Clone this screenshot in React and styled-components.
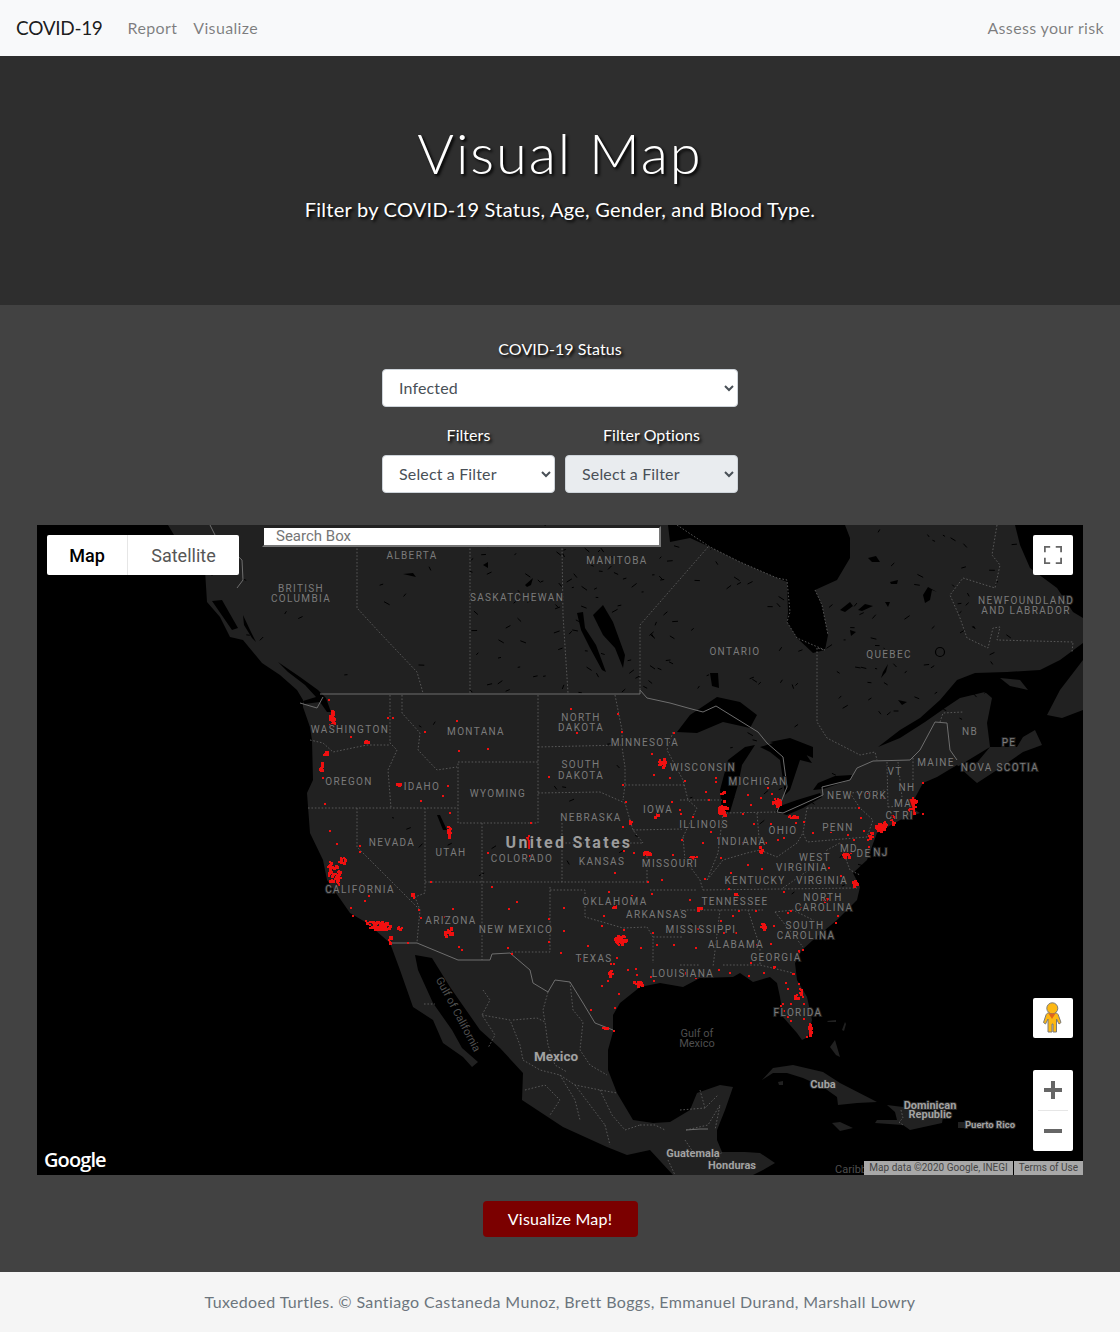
import React from 'react';
import styled, { createGlobalStyle } from 'styled-components';

const GlobalStyle = createGlobalStyle`
  body {
    margin: 0;
    background: #424242;
    font-family: 'Lato', 'Noto Sans', sans-serif;
  }
`;

// all map geometry is in page pixels, the viewBox lines it up with the frame
const LAND = [
  'M168 525L180 545L205 570L207 602L220 617L230 637L243 640L262 663L280 675L297 690L303 700L303 707L310 727L312 740L313 780L307 793L310 833L323 860L327 880L350 913L367 923L390 943L400 970L413 1007L433 1020L443 1043L463 1057L472 1067L478 1062L462 1048L452 1030L433 1003L418 970L415 955L432 958L450 987L480 1030L500 1048L523 1073L522 1100L563 1127L607 1147L627 1155L650 1150L673 1175L753 1175L763 1170L775 1163L760 1153L745 1152L722 1152L717 1140L717 1130L725 1110L733 1087L720 1085L697 1093L690 1110L670 1122L653 1123L633 1120L617 1093L608 1070L608 1050L613 1032L613 1015L620 1003L640 987L660 983L683 987L700 978L733 977L740 973L753 982L770 977L777 983L780 997L783 1017L797 1033L802 1040L808 1037L812 1020L807 997L797 980L795 963L802 950L813 940L837 920L857 900L860 887L853 873L867 860L877 833L900 820L920 813L910 807L923 783L937 777L957 765L970 777L977 783L997 770L1023 752L1042 745L1035 730L1023 737L1017 747L990 747L987 723L992 698L985 692L960 698L945 708L925 722L900 738L878 747L900 730L920 718L940 700L957 680L975 673L1007 672L1040 670L1060 660L1083 643L1083 618L1073 612L1057 588L1030 568L1020 545L1015 525Z',
  'M1083 660L1060 690L1047 715L1062 718L1083 710Z',
  'M1000 678L1020 680L1028 690L1010 686Z',
  'M762 1080L773 1068L793 1065L823 1072L840 1083L877 1102L857 1103L838 1105L837 1097L823 1087L803 1078L787 1073L773 1073Z',
  'M778 1082L783 1081L783 1085L779 1085Z',
  'M887 1105L903 1107L920 1110L943 1117L942 1123L910 1130L903 1125L875 1123L877 1120L897 1120L895 1112Z',
  'M832 1123L840 1122L853 1128L840 1131Z',
  'M958 1122L967 1122L967 1128L958 1128Z',
  'M830 1047L835 1040L840 1057L836 1055Z',
  'M842 1030L845 1022L846 1024L844 1031Z',
  'M827 1021L836 1020L836 1022L828 1022Z',
];

const WATER = [
  // hudson and james bay
  'M668 525L670 542L690 538L710 547L740 562L777 578L787 582L788 612L787 622L797 638L813 653L825 650L828 635L822 605L815 590L837 580L850 558L850 538L845 525Z',
  // superior, michigan, huron, north channel, erie, ontario
  'M677 732L690 715L717 697L740 702L757 715L750 728L723 722L697 733Z',
  'M722 813L720 790L728 760L745 747L755 745L742 765L738 785L730 812Z',
  'M760 747L773 743L790 745L803 750L812 763L800 760L795 775L790 790L785 795L783 780L780 760L770 752Z',
  'M770 742L790 738L813 747L813 758L795 750Z',
  'M775 812L787 815L803 808L822 797L820 793L797 800L780 806Z',
  'M813 790L823 789L850 780L852 775L835 776L818 783Z',
  // lake winnipeg and friends
  'M593 615L603 605L613 622L625 655L623 668L615 648L603 635Z',
  'M577 613L583 612L585 628L596 645L606 672L602 670L590 648L581 630Z',
  'M710 673L718 673L719 688L712 686Z',
  // quebec lakes
  'M840 610L850 602L853 606L845 612Z', 'M858 610L865 604L873 606L862 611Z', 'M885 602L890 602L888 607Z',
  'M923 595L928 587L937 592L932 590L930 600L925 603Z', 'M890 582L898 580L897 584L891 584Z', 'M868 558L876 556L880 562L872 562Z',
  'M850 630L856 632L851 636Z', 'M898 700L907 702L902 705Z', 'M883 672L888 664L886 672L881 678Z',
  'M525 585L533 578L531 585L527 587Z', 'M483 565L488 562L488 568Z', 'M403 574L413 573L416 577Z',
  // salt lake, fundy
  'M437 815L440 815L447 830L443 830Z',
  'M957 767L990 747L975 765L968 772Z',
  // strait of georgia, juan de fuca and the channels of bc
  'M278 662L300 677L318 690L326 698L331 712L327 712L320 702L304 704L303 701L316 697L305 685L288 672Z',
  'M212 601L222 600L238 628L232 630Z',
  'M182 545L200 560L213 576L208 574L192 560Z',
  'M243 615L250 630L256 642L252 638L244 625Z',
];

const INTERNATIONAL = [
  'M320 694L640 694L640 690L647 698L670 703L688 708L703 712L716 706L758 732L767 743L783 757L787 787L777 812L783 813L823 795L822 787L850 780L857 768L873 761L910 760L920 750L935 722L947 723L950 750L957 760',
  'M300 703L317 708L323 697',
  'M210 525L215 535L242 560L243 580L237 588',
  'M390 943L417 943L458 960L490 960L492 954L510 953L530 970L533 983L548 992L555 980L570 982L583 1003L595 1023L613 1030',
  'M686 1130L700 1129L708 1129',
];

const STATE_LINES = [
  // canada
  'M357 545L357 608L380 633L417 672L423 693', 'M470 545L470 693', 'M562 545L563 615L568 693',
  'M708 547L640 625L640 690', 'M817 648L817 722L827 738L860 755L875 752L877 760',
  'M997 525L992 555L1000 565L995 588L963 578L950 595L960 618L967 638L988 648L993 628L1000 627L997 640L1073 642L1072 652',
  'M677 525L710 547L740 562L777 578L787 580L790 612L787 622L797 638L813 645L825 650L817 648',
  'M815 590L822 605L828 635',
  'M940 722L943 713L963 712',
  // western states
  'M310 740L323 743L333 752L367 745L390 745', 'M390 695L390 743L397 750L388 770L391 808',
  'M402 695L402 713L420 733L418 750L437 770L457 767', 'M458 762L538 762L538 823L458 823Z',
  'M308 808L458 808', 'M357 808L357 847L420 910', 'M425 808L425 893L415 897L420 910L417 942',
  'M482 823L482 960', 'M425 882L647 882', 'M562 823L562 882', 'M538 695L538 762',
  'M538 793L600 792L625 803L633 830L643 843', 'M562 843L643 843', 'M647 853L647 882',
  'M538 747L622 745', 'M615 695L622 730L622 747L625 767L625 785L623 800', 'M625 785L685 785',
  'M673 732L667 750L683 780L688 800L697 808L683 837', 'M633 830L682 829',
  'M550 890L585 890L585 917L623 928L647 927', 'M550 887L550 952L510 952',
  'M650 890L697 890', 'M653 937L683 937', 'M647 927L653 937L653 963', 'M680 965L700 965',
  'M683 837L685 860L700 880L703 890',
  // eastern states
  'M703 890L857 888', 'M680 910L763 910', 'M720 910L713 967', 'M748 910L760 947L760 965',
  'M723 965L760 965L793 973', 'M775 912L793 910L817 922', 'M775 912L803 947',
  'M680 800L722 800', 'M723 813L718 853L707 880', 'M723 813L777 812', 'M757 813L760 850',
  'M707 880L723 860L747 853L760 850L777 857L797 843L803 833L807 808',
  'M807 808L860 808L873 820L867 837L807 842L803 833', 'M840 843L850 870L860 875',
  'M783 888L813 867L827 850L840 843', 'M887 762L888 807', 'M898 762L902 797', 'M913 758L913 783', 'M888 807L910 805',
  'M860 808L850 793L888 790',
  // mexico
  'M483 990L490 1000L482 1015L495 1035L488 1048', 'M482 1015L510 1020L520 1045L523 1060',
  'M513 1020L537 1018L545 1022L548 1045L555 1065L567 1072', 'M548 992L543 1010L545 1022',
  'M570 982L573 1010L583 1022L580 1050L590 1065L607 1075',
  'M523 1060L540 1070L560 1075L575 1085L600 1090L617 1093',
  'M525 1090L545 1085L560 1100L550 1115', 'M560 1075L575 1100L580 1120',
  'M575 1085L590 1105L605 1125', 'M600 1090L612 1115L625 1130L640 1125',
  'M605 1125L610 1145', 'M640 1125L655 1125L665 1130',
  'M680 1110L705 1108L718 1095', 'M705 1108L700 1090', 'M686 1130L708 1125L720 1105L715 1130',
  'M685 1140L695 1155', 'M668 1160L675 1175', 'M708 1170L722 1152',
  'M424 1004L435 1004',
  'M901 1110L903 1118L899 1122L903 1125',
];

const makeRng = (seed) => () => {
  seed = (seed * 16807) % 2147483647;
  return (seed - 1) / 2147483646;
};

// little lakes scattered over canada and the states
const makeFlecks = () => {
  const rnd = makeRng(4242);
  let d = '';
  const regions = [
    [240, 530, 430, 160, 30],
    [470, 528, 200, 165, 80],
    [640, 530, 240, 160, 40],
    [830, 530, 190, 190, 60],
    [320, 700, 380, 200, 18],
    [680, 720, 200, 220, 18],
  ];
  regions.forEach(([x, y, w, h, n]) => {
    for (let i = 0; i < n; i++) {
      const px = x + rnd() * w;
      const py = y + rnd() * h;
      const dx = 1 + rnd() * 4;
      const dy = (rnd() - 0.5) * 7;
      d += `M${px.toFixed(1)} ${py.toFixed(1)}l${dx.toFixed(1)} ${dy.toFixed(1)}`;
    }
  });
  return d;
};

const from5 = ([x, y]) => [300 + x / 3, 680 + y / 3];
const from6 = ([x, y]) => [680 + x / 3, 680 + y / 3];
const from8 = ([x, y]) => [400 + x / 3, 960 + y / 3];
const from11 = ([x, y]) => [740 + x / 3, 940 + y / 3];

const DOTS_5 = [[85,58],[468,120],[372,152],[150,167],[262,112],[275,112],[475,211],[560,205],[63,263],[65,290],[125,290],[442,315],[427,344],[360,360],[72,368],[447,397],[88,450],[108,488],[176,495],[178,513],[560,517],[690,427],[810,85],[952,98],[962,152],[828,155],[1120,157],[1052,218],[1058,283],[1108,290],[1152,300],[745,288],[965,313],[975,363],[1112,362],[1138,387],[1175,408],[990,422],[1140,400],[966,437],[968,510],[1000,517],[1115,521],[1144,478],[943,577],[1082,597],[1040,603],[390,603],[572,618],[925,632],[992,645],[648,662],[790,682],[625,685],[1052,640],[1168,656],[1110,690],[1190,690],[908,706],[745,713],[456,684],[430,708],[361,712],[902,735],[968,748],[1056,755],[788,750],[620,800],[632,820],[475,797],[482,808],[745,782],[860,796],[780,815],[838,835],[948,830],[1120,793],[1067,793],[1020,800],[930,850],[935,880],[180,612],[205,645],[150,680],[155,705],[193,660],[120,590],[335,640],[340,650],[355,686],[290,740],[300,745],[322,785]];
const DOTS_6 = [[65,245],[105,290],[105,303],[75,332],[120,340],[200,342],[240,350],[272,338],[260,320],[210,372],[185,400],[35,408],[85,358],[90,453],[110,470],[65,485],[160,470],[185,485],[255,485],[240,510],[290,478],[310,470],[220,428],[270,430],[345,425],[370,422],[395,455],[450,452],[500,462],[520,478],[550,450],[540,412],[535,380],[475,330],[560,335],[610,350],[725,307],[725,400],[645,378],[648,400],[560,478],[565,497],[480,490],[510,508],[150,575],[200,553],[242,563],[72,595],[145,625],[120,530],[310,632],[380,645],[395,595],[445,562],[480,585],[485,665],[360,680],[430,687],[470,705],[465,725],[395,775],[365,808],[355,812],[330,690],[280,735],[225,690],[155,705],[120,720],[175,690],[130,755],[165,755],[45,800],[130,795],[235,795],[270,790],[210,845],[280,860],[335,880],[115,868],[55,880],[85,878],[15,880],[50,745],[320,695]];
const DOTS_8 = [[630,30],[640,10],[603,74],[622,60],[655,98],[643,142],[570,148],[638,210],[750,48],[760,60],[825,42],[855,36],[885,50],[925,36],[988,36],[1045,44],[1090,36],[1122,18],[1178,40],[680,28],[704,24],[708,42]];
const DOTS_11 = [[178,145],[165,170],[190,190],[120,195],[150,188],[150,240],[157,100],[135,125],[140,145],[175,130],[30,65],[70,95],[100,78],[25,105],[90,8],[175,30],[47,12],[125,190],[130,210],[140,228],[205,215],[188,235],[198,288],[178,155],[185,168]];

// [mapper, x, y, half width, half height, count]
const CLUSTERS = [
  [from5, 92, 120, 8, 20, 22], [from5, 95, 95, 3, 8, 6], [from5, 78, 218, 10, 6, 10], [from5, 62, 263, 7, 4, 5],
  [from5, 196, 183, 6, 3, 6], [from5, 292, 310, 9, 3, 8], [from5, 65, 248, 3, 7, 4],
  [from5, 98, 575, 18, 30, 36], [from5, 122, 537, 14, 10, 12], [from5, 85, 550, 8, 10, 8], [from5, 108, 600, 8, 12, 8],
  [from5, 238, 735, 36, 12, 55], [from5, 205, 722, 12, 5, 6], [from5, 268, 775, 5, 16, 12], [from5, 295, 742, 8, 4, 5], [from5, 335, 640, 6, 4, 5],
  [from5, 440, 752, 20, 14, 18], [from5, 445, 450, 6, 22, 14], [from5, 683, 485, 9, 22, 16], [from5, 688, 527, 4, 3, 4],
  [from5, 1082, 245, 10, 14, 20], [from5, 1036, 519, 12, 7, 10], [from5, 958, 778, 18, 15, 40],
  [from5, 1178, 530, 11, 6, 8], [from5, 1068, 405, 6, 6, 5], [from5, 940, 675, 7, 9, 6], [from5, 990, 422, 5, 5, 4],
  [from6, 125, 390, 15, 15, 44], [from6, 128, 345, 5, 20, 6], [from6, 287, 365, 12, 12, 26], [from6, 335, 408, 16, 6, 8],
  [from6, 600, 440, 16, 12, 36], [from6, 625, 425, 18, 8, 12], [from6, 570, 465, 10, 14, 7],
  [from6, 695, 368, 15, 18, 28], [from6, 690, 392, 12, 6, 6], [from6, 640, 403, 10, 7, 5],
  [from6, 497, 520, 14, 12, 12], [from6, 520, 610, 9, 10, 12], [from6, 435, 655, 10, 6, 8],
  [from6, 245, 737, 8, 9, 14], [from6, 165, 645, 7, 12, 9], [from6, 55, 685, 7, 6, 6], [from6, 240, 505, 4, 16, 7],
  [from6, 35, 530, 9, 5, 6], [from6, 295, 370, 4, 4, 3],
  [from8, 630, 36, 7, 12, 10], [from8, 712, 68, 16, 10, 14], [from8, 612, 200, 10, 5, 6],
  [from11, 207, 265, 4, 18, 18], [from11, 165, 170, 5, 10, 6], [from11, 180, 150, 3, 12, 4],
];

const makeDots = () => {
  const rnd = makeRng(90210);
  let d = '';
  const dot = ([x, y], s = 3) => {
    d += `M${Math.round(x)} ${Math.round(y)}h${s}v${s}h-${s}z`;
  };
  DOTS_5.forEach((p) => dot(from5(p), 2));
  DOTS_6.forEach((p) => dot(from6(p), 2));
  DOTS_8.forEach((p) => dot(from8(p), 2));
  DOTS_11.forEach((p) => dot(from11(p), 2));
  CLUSTERS.forEach(([map, x, y, w, h, n]) => {
    for (let i = 0; i < n; i++) {
      const a = rnd() * Math.PI * 2;
      const r = Math.sqrt(rnd());
      dot(map([x + Math.cos(a) * r * w, y + Math.sin(a) * r * h]), 2 + Math.round(rnd()));
    }
  });
  return d;
};

// [text, centre x, centre y]
const STATE_LABELS = [
  ['ALBERTA', 412, 555], ['MANITOBA', 617, 560], ['BRITISH', 301, 588], ['COLUMBIA', 301, 598],
  ['SASKATCHEWAN', 517, 597], ['ONTARIO', 735, 651], ['QUEBEC', 889, 654],
  ['NEWFOUNDLAND', 1026, 600], ['AND LABRADOR', 1026, 610], ['WASHINGTON', 350, 729],
  ['MONTANA', 476, 731], ['NORTH', 581, 717], ['DAKOTA', 581, 727], ['MINNESOTA', 645, 742],
  ['WISCONSIN', 703, 767], ['MAINE', 936, 762], ['NB', 970, 731], ['PE', 1009, 742],
  ['NOVA SCOTIA', 1000, 767], ['MICHIGAN', 758, 781], ['VT', 895, 771], ['NH', 907, 787],
  ['MA', 903, 803], ['CT', 893, 815], ['RI', 908, 815], ['NEW YORK', 857, 795], ['OREGON', 349, 781],
  ['IDAHO', 422, 786], ['WYOMING', 498, 793], ['SOUTH', 581, 764], ['DAKOTA', 581, 775],
  ['IOWA', 658, 809], ['NEBRASKA', 591, 817], ['ILLINOIS', 704, 824], ['OHIO', 783, 830],
  ['PENN', 838, 827], ['MD', 849, 848], ['DE', 864, 853], ['NJ', 881, 852], ['NEVADA', 392, 842],
  ['UTAH', 451, 852], ['COLORADO', 522, 858], ['KANSAS', 602, 861], ['MISSOURI', 670, 863],
  ['INDIANA', 742, 841], ['WEST', 815, 857], ['VIRGINIA', 802, 867], ['KENTUCKY', 755, 880],
  ['VIRGINIA', 822, 880], ['TENNESSEE', 735, 901], ['NORTH', 823, 897], ['CAROLINA', 824, 907],
  ['CALIFORNIA', 360, 889], ['OKLAHOMA', 615, 901], ['ARKANSAS', 657, 914], ['ARIZONA', 451, 920],
  ['NEW MEXICO', 516, 929], ['MISSISSIPPI', 701, 929], ['SOUTH', 805, 925], ['CAROLINA', 806, 935],
  ['ALABAMA', 736, 944], ['GEORGIA', 776, 957], ['TEXAS', 594, 958], ['LOUISIANA', 683, 973],
  ['FLORIDA', 798, 1012],
];

const COUNTRY_LABELS = [
  ['Mexico', 556, 1056, 13.5], ['Cuba', 823, 1084, 11], ['Dominican', 930, 1105, 11], ['Republic', 930, 1114.5, 11],
  ['Puerto Rico', 990, 1125, 9.5], ['Guatemala', 693, 1153, 11], ['Honduras', 732, 1165, 11],
];

const SEA_LABELS = [
  ['Gulf of', 697, 1033], ['Mexico', 697, 1043], ['Caribbean', 860, 1169],
];

const landPath = LAND.join('');
const waterPath = WATER.join('');
const fleckPath = makeFlecks();
const dotPath = makeDots();

const MapDrawing = () => (
  <MapSvg viewBox="37 525 1046 650">
    <path d={landPath} fill="#212121" />
    <path d={waterPath} fill="#000" />
    <path d={fleckPath} fill="none" stroke="#000" strokeWidth="1" strokeLinecap="round" />
    <circle cx="940" cy="652" r="4.5" fill="none" stroke="#000" strokeWidth="1.2" />
    <path d={STATE_LINES.join('')} fill="none" stroke="#5e5e5e" strokeWidth="0.9" strokeDasharray="1.6 1.8" />
    <path d={INTERNATIONAL.join('')} fill="none" stroke="#6e6e6e" strokeWidth="1" />
    <path d={dotPath} fill="#f01010" />
    {STATE_LABELS.map(([label, x, y]) => (
      <StateLabel key={`${label}-${x}`} x={x} y={y + 3.6}>{label}</StateLabel>
    ))}
    <CountryBig x="569" y="847.5">United States</CountryBig>
    {COUNTRY_LABELS.map(([label, x, y, size]) => (
      <CountryLabel key={label} x={x} y={y + size * 0.36} $size={size}>{label}</CountryLabel>
    ))}
    {SEA_LABELS.map(([label, x, y]) => (
      <SeaLabel key={`${label}-${x}`} x={x} y={y + 3.6}>{label}</SeaLabel>
    ))}
    <SeaLabel x="455" y="1016" transform="rotate(62 455 1016)">Gulf of California</SeaLabel>
  </MapSvg>
);

const PegmanIcon = () => (
  <svg width="40" height="40" viewBox="0 0 40 40">
    <path
      d="M15.500 15h7c1.500 0 2.300.8 2.800 2l2.700 7.500-2 1.500-2.500-5v13h-3.500v-8h-1v8H15v-13l-2.500 5-2-1.500L13 17c.5-1.200 1.200-2 2.500-2z"
      fill="#fdb813"
      stroke="#7a7a7a"
      strokeWidth="1"
    />
    <circle cx="19.300" cy="10.300" r="5.500" fill="#fdb813" stroke="#7a7a7a" strokeWidth="1" />
    <path d="M15.500 15.500h7L19 21z" fill="#e0641c" />
  </svg>
);

const App = () => {
  return (
    <>
      <GlobalStyle />
      <Navbar>
        <NavLeft>
          <Brand>COVID-19</Brand>
          <NavLink>Report</NavLink>
          <NavLink>Visualize</NavLink>
        </NavLeft>
        <NavLink>Assess your risk</NavLink>
      </Navbar>
      <Hero>
        <Title>Visual Map</Title>
        <Lead>Filter by COVID-19 Status, Age, Gender, and Blood Type.</Lead>
      </Hero>
      <Main>
        <Field>
          <FieldLabel>COVID-19 Status</FieldLabel>
          <Select $width={356} defaultValue="Infected">
            <option>Infected</option>
          </Select>
        </Field>
        <FilterRow>
          <Field>
            <FieldLabel>Filters</FieldLabel>
            <Select $width={173}>
              <option>Select a Filter</option>
            </Select>
          </Field>
          <Field>
            <FieldLabel>Filter Options</FieldLabel>
            <Select $width={173} disabled>
              <option>Select a Filter</option>
            </Select>
          </Field>
        </FilterRow>
        <MapFrame>
          <MapDrawing />
          <MapTypes>
            <MapType $active>Map</MapType>
            <MapType>Satellite</MapType>
          </MapTypes>
          <SearchBox placeholder="Search Box" />
          <FullscreenButton>
            <svg width="18" height="18" viewBox="0 0 18 18">
              <path
                d="M0 6V0h6M12 0h6v6M18 12v6h-6M6 18H0v-6"
                fill="none"
                stroke="#666"
                strokeWidth="2.500"
                transform="translate(.6 .6) scale(.93)"
              />
            </svg>
          </FullscreenButton>
          <PegmanButton>
            <PegmanIcon />
          </PegmanButton>
          <ZoomControl>
            <ZoomButton>
              <svg width="18" height="18" viewBox="0 0 18 18">
                <path d="M0 7h7V0h4v7h7v4h-7v7H7v-7H0z" fill="#666" />
              </svg>
            </ZoomButton>
            <ZoomDivider />
            <ZoomButton>
              <svg width="18" height="18" viewBox="0 0 18 18">
                <path d="M0 7h18v4H0z" fill="#666" />
              </svg>
            </ZoomButton>
          </ZoomControl>
          <GoogleLogo>Google</GoogleLogo>
          <Attribution>
            <AttributionItem>Map data ©2020 Google, INEGI</AttributionItem>
            <AttributionItem>Terms of Use</AttributionItem>
          </Attribution>
        </MapFrame>
        <VisualizeButton>Visualize Map!</VisualizeButton>
      </Main>
      <Footer>Tuxedoed Turtles. © Santiago Castaneda Munoz, Brett Boggs, Emmanuel Durand, Marshall Lowry</Footer>
    </>
  );
};

export default App;

const Navbar = styled.nav`
  height: 56px;
  box-sizing: border-box;
  padding: 0 16px 2px;
  display: flex;
  align-items: center;
  justify-content: space-between;
  background: #f8f9fa;
`;

const NavLeft = styled.div`
  display: flex;
  align-items: center;
`;

const Brand = styled.div`
  font-size: 19px;
  color: rgba(0, 0, 0, 0.9);
  margin-right: 17px;
  letter-spacing: -0.3px;
`;

const NavLink = styled.a`
  font-size: 16px;
  color: rgba(0, 0, 0, 0.5);
  padding: 0 8px;
  letter-spacing: 0.35px;

  &:last-child {
    padding-right: 0;
  }
`;

const Hero = styled.header`
  box-sizing: border-box;
  height: 249px;
  padding-top: 64px;
  background: #2e2e2e;
  color: #fff;
  text-align: center;
`;

const Title = styled.h1`
  margin: 0 0 10px;
  font-size: 56px;
  font-weight: 300;
  line-height: 65px;
  letter-spacing: 1.9px;
  text-shadow: 2px 2px 3px #000;
`;

const Lead = styled.p`
  margin: 0;
  font-size: 20px;
  font-weight: 400;
  line-height: 28px;
  letter-spacing: 0.25px;
  text-shadow: 2px 2px 3px #000;
`;

const Main = styled.main`
  box-sizing: border-box;
  height: 967px;
  padding-top: 32px;
  display: flex;
  flex-direction: column;
  align-items: center;
  background: #424242;
`;

const Field = styled.div`
  display: flex;
  flex-direction: column;
  align-items: center;
`;

const FieldLabel = styled.label`
  margin-bottom: 8px;
  font-size: 16px;
  line-height: 24px;
  color: #fff;
  letter-spacing: 0.05px;
  text-shadow: 2px 2px 3px #000;
`;

const Select = styled.select`
  width: ${(p) => p.$width}px;
  height: 38px;
  box-sizing: border-box;
  padding: 5px 12px 7px;
  border: 1px solid #ced4da;
  border-radius: 4px;
  background-color: ${(p) => (p.disabled ? '#e9ecef' : '#fff')};
  color: #495057;
  opacity: 1;
  font-family: 'Lato', 'Noto Sans', sans-serif;
  font-size: 16px;
  letter-spacing: 0.15px;
`;

const FilterRow = styled.div`
  display: flex;
  gap: 10px;
  margin-top: 16px;
`;

const MapFrame = styled.div`
  position: relative;
  width: 1046px;
  height: 650px;
  margin-top: 32px;
  overflow: hidden;
  background: #000;
`;

const MapSvg = styled.svg`
  display: block;
  width: 1046px;
  height: 650px;
`;

const StateLabel = styled.text`
  font-family: 'Roboto', sans-serif;
  font-size: 10px;
  letter-spacing: 1.35px;
  text-anchor: middle;
  fill: #7b7b7b;
  stroke: #212121;
  stroke-width: 2px;
  paint-order: stroke;
`;

const CountryBig = styled.text`
  font-family: 'Roboto', sans-serif;
  font-size: 16px;
  font-weight: 700;
  letter-spacing: 2.3px;
  text-anchor: middle;
  fill: #9c9c9c;
  stroke: #212121;
  stroke-width: 2px;
  paint-order: stroke;
`;

const CountryLabel = styled.text`
  font-family: 'Roboto', sans-serif;
  font-size: ${(p) => p.$size}px;
  font-weight: 700;
  text-anchor: middle;
  fill: #a2a2a2;
  stroke: #262626;
  stroke-width: 2px;
  paint-order: stroke;
`;

const SeaLabel = styled.text`
  font-family: 'Roboto', sans-serif;
  font-size: 11px;
  text-anchor: middle;
  fill: #4e4e4e;
`;

const MapTypes = styled.div`
  position: absolute;
  top: 10px;
  left: 10px;
  display: flex;
  height: 40px;
  border-radius: 2px;
  overflow: hidden;
  background: #fff;
`;

const MapType = styled.div`
  display: flex;
  align-items: center;
  justify-content: center;
  box-sizing: border-box;
  width: ${(p) => (p.$active ? '81px' : '111px')};
  border-right: ${(p) => (p.$active ? '1px solid #e6e6e6' : 'none')};
  font-family: 'Roboto', sans-serif;
  font-size: 18px;
  font-weight: ${(p) => (p.$active ? 500 : 400)};
  color: ${(p) => (p.$active ? '#000' : '#565656')};
`;

const SearchBox = styled.input`
  position: absolute;
  top: 1px;
  left: 225px;
  width: 399px;
  height: 21px;
  box-sizing: border-box;
  padding: 0 12px 2px;
  border: 2px inset #767676;
  background: #fff;
  font-family: 'Roboto', sans-serif;
  font-size: 15px;

  &::placeholder {
    color: #757575;
  }
`;

const ControlBox = styled.div`
  position: absolute;
  right: 10px;
  display: flex;
  align-items: center;
  justify-content: center;
  width: 40px;
  background: #fff;
  border-radius: 2px;
`;

const FullscreenButton = styled(ControlBox)`
  top: 10px;
  height: 40px;
`;

const PegmanButton = styled(ControlBox)`
  top: 473px;
  height: 40px;
`;

const ZoomControl = styled(ControlBox)`
  top: 545px;
  height: 81px;
  flex-direction: column;
`;

const ZoomButton = styled.div`
  display: flex;
  align-items: center;
  justify-content: center;
  width: 40px;
  height: 40px;
`;

const ZoomDivider = styled.div`
  width: 30px;
  height: 1px;
  background: #e6e6e6;
`;

const GoogleLogo = styled.div`
  position: absolute;
  left: 7px;
  bottom: 2px;
  font-family: 'Open Sans', sans-serif;
  font-size: 20px;
  font-weight: 600;
  letter-spacing: -0.9px;
  color: #fff;
`;

const Attribution = styled.div`
  position: absolute;
  right: 0;
  bottom: 0;
  display: flex;
  gap: 1px;
  height: 14px;
`;

const AttributionItem = styled.div`
  padding: 0 5px;
  background: #a8a8a8;
  font-family: 'Roboto', sans-serif;
  font-size: 10px;
  line-height: 14px;
  color: #444;
`;

const VisualizeButton = styled.button`
  width: 155px;
  height: 36px;
  margin-top: 26px;
  padding: 0 0 2px;
  border: none;
  border-radius: 4px;
  background: #7b0000;
  color: #fff;
  font-family: 'Lato', 'Noto Sans', sans-serif;
  font-size: 16px;
  letter-spacing: 0.2px;
`;

const Footer = styled.footer`
  height: 60px;
  box-sizing: border-box;
  padding-bottom: 2px;
  display: flex;
  align-items: center;
  justify-content: center;
  background: #f5f5f5;
  color: #6c757d;
  font-size: 16px;
  letter-spacing: 0.37px;
`;
